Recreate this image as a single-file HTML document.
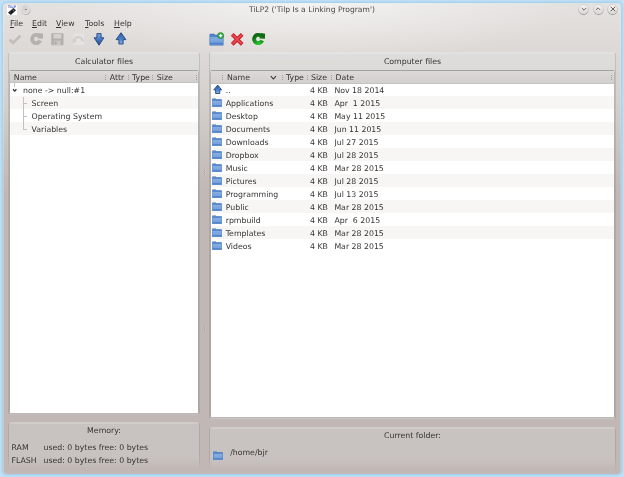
<!DOCTYPE html>
<html>
<head>
<meta charset="utf-8">
<title>TiLP2 ('Tilp Is a Linking Program')</title>
<style>
html,body{margin:0;padding:0;}
body{width:624px;height:477px;overflow:hidden;background:#c4dff3;font-family:"DejaVu Sans","Liberation Sans",sans-serif;font-size:7.8px;color:#363432;position:relative;}
.abs{position:absolute;}
#win{position:absolute;left:3px;top:3px;width:618px;height:471px;border-radius:4px;
 background:
  radial-gradient(ellipse 260px 58px at 309px 0px,rgba(255,255,255,0.58) 0,rgba(255,255,255,0.28) 50%,rgba(255,255,255,0) 100%),
  linear-gradient(to bottom,#e4e2e0 0px,#dfdbd8 35px,#dcd8d5 52px,#d3cfcc 103px,#c8c3bf 147px,#c4bcb8 172px,#c1b8b5 192px,#c1b8b5 471px);
 box-shadow:inset 1px 0 0 rgba(255,255,255,0.22),inset -1px 0 0 rgba(255,255,255,0.15),0 0 0 1px #a6d4f0,0 0 0 2px #b2d9f2,0 0 0 3px #c0def3;}
#c{position:absolute;left:-3px;top:-3px;width:624px;height:477px;}
.t{position:absolute;white-space:nowrap;line-height:10px;height:10px;filter:blur(0.4px);}
u{text-decoration-thickness:0.7px;text-underline-offset:1px;}
.frame{position:absolute;border-radius:3px;box-sizing:border-box;background:rgba(228,240,238,0.2);border:1px solid rgba(0,0,0,0.13);border-top-color:rgba(255,255,255,0.12);border-bottom-color:rgba(0,0,0,0.03);box-shadow:inset 0 1px 0 rgba(255,255,255,0.16);}
.fade{-webkit-mask-image:linear-gradient(to bottom,#000 70%,transparent 100%);mask-image:linear-gradient(to bottom,#000 70%,transparent 100%);}
.tree{position:absolute;background:#fff;overflow:hidden;box-sizing:border-box;border:1px solid rgba(0,0,0,0.15);border-top-color:rgba(0,0,0,0.25);border-bottom-color:rgba(0,0,0,0.06);border-radius:2px;background-clip:padding-box;}
.tree>.in{position:absolute;left:0;top:0;right:0;bottom:0;background:#fff;}
.hdr{position:absolute;left:0;top:0;right:0;background:linear-gradient(#dcdad8,#d2cfcc);border-bottom:1px solid #c6c2bf;box-sizing:border-box;}
.row{position:absolute;left:0;right:0;height:13px;}
.alt{background:#f7f6f5;}
.sep{position:absolute;width:1px;height:5px;margin-top:1px;background:repeating-linear-gradient(#a29e9b 0 1px,transparent 1px 2px);}
.dot{position:absolute;width:1px;height:1px;background:rgba(0,0,0,0.12);box-shadow:1px 0 0 rgba(255,255,255,0.2);}
.btn{position:absolute;width:9px;height:9px;border-radius:50%;background:linear-gradient(#f3f2f1,#e4e2e0 60%,#d8d6d4);box-shadow:0 0 0 0.6px rgba(0,0,0,0.13),0 0.8px 1px rgba(0,0,0,0.35);}
</style>
</head>
<body>
<svg width="0" height="0" style="position:absolute"><defs>
<linearGradient id="fg" x1="0" y1="0" x2="0" y2="1"><stop offset="0" stop-color="#82ace4"/><stop offset="1" stop-color="#739fdc"/></linearGradient>
<linearGradient id="ag" x1="0" y1="0" x2="0" y2="1"><stop offset="0" stop-color="#2f5fa6"/><stop offset="0.55" stop-color="#4a7cc8"/><stop offset="1" stop-color="#86b4f2"/></linearGradient>
<linearGradient id="dg" x1="0" y1="0" x2="0" y2="1"><stop offset="0" stop-color="#7aa9ea"/><stop offset="0.5" stop-color="#4677c2"/><stop offset="1" stop-color="#28518f"/></linearGradient>
<radialGradient id="gg" gradientUnits="userSpaceOnUse" cx="6.8" cy="11.5" r="9"><stop offset="0" stop-color="#2ad034"/><stop offset="0.45" stop-color="#1a9e22"/><stop offset="1" stop-color="#0c6a13"/></radialGradient>
</defs></svg>
<div id="win"><div id="c">

<div class="t" style="left:0;width:624px;text-align:center;top:5.1px;color:#484644;font-size:7.6px;">TiLP2 ('Tilp Is a Linking Program')</div>
<svg class="abs" style="left:7px;top:5px;filter:blur(0.3px)" width="10" height="10" viewBox="0 0 10 10"><rect width="10" height="10" fill="#fff"/><text x="0.7" y="2.9" font-size="3.3" font-weight="bold" fill="#4a62cc" font-family="DejaVu Sans,sans-serif" textLength="8.4" lengthAdjust="spacingAndGlyphs">TiLP</text><path d="M1 7.7 L6.3 2.9 L9 5.3 L3.9 10 Z" fill="#1a1c20"/><path d="M5.6 4.6 L7.2 6" stroke="#7fa0a8" stroke-width="1"/><path d="M3 7.2 L4.6 8.6" stroke="#3a3e44" stroke-width="0.8"/></svg>
<div class="abs" style="left:21.4px;top:5.4px;width:9px;height:9px;border-radius:50%;background:radial-gradient(circle at 45% 42%,#d0cecc 0,#d9d7d5 40%,#e2e0de 65%,#c4c2c0 100%);box-shadow:0.3px 0.6px 0.9px rgba(0,0,0,0.38)"></div><div class="abs" style="left:25.3px;top:9.1px;width:1.3px;height:1.2px;background:#8a8886;border-radius:50%"></div>
<div class="btn" style="left:579.3px;top:4.8px"></div><svg class="abs" style="left:578.8px;top:4.3px" width="10" height="10" viewBox="-5 -5 10 10"><path d="M-2.1 -0.9 L0 1.2 L2.1 -0.9" fill="none" stroke="#555351" stroke-width="0.9"/></svg>
<div class="btn" style="left:593.7px;top:4.8px"></div><svg class="abs" style="left:593.2px;top:4.3px" width="10" height="10" viewBox="-5 -5 10 10"><path d="M-2.1 0.9 L0 -1.2 L2.1 0.9" fill="none" stroke="#555351" stroke-width="0.9"/></svg>
<div class="btn" style="left:608.2px;top:4.8px"></div><svg class="abs" style="left:607.7px;top:4.3px" width="10" height="10" viewBox="-5 -5 10 10"><path d="M-2.2 -2.2 L2.2 2.2 M2.2 -2.2 L-2.2 2.2" fill="none" stroke="#555351" stroke-width="0.9"/></svg>
<div class="t" style="left:10px;top:19px;"><u>F</u>ile</div>
<div class="t" style="left:32px;top:19px;"><u>E</u>dit</div>
<div class="t" style="left:56px;top:19px;"><u>V</u>iew</div>
<div class="t" style="left:85px;top:19px;"><u>T</u>ools</div>
<div class="t" style="left:114px;top:19px;"><u>H</u>elp</div>
<svg class="abs" style="left:8px;top:33px" width="14" height="13" viewBox="0 0 14 13"><path d="M1.6 6.6 L5 10 L12.4 2.6" fill="none" stroke="#c1bdba" stroke-width="2.7" stroke-linejoin="round"/></svg>
<svg class="abs" style="left:29.7px;top:33px;overflow:visible" width="14" height="13" viewBox="0 0 14 13"><path d="M10.15 7.55 A4.15 4.15 0 1 1 8.68 2.60" fill="none" stroke="#b5b1ae" stroke-width="3.9"/><path d="M7.4 5.6 L12.9 5.8 L13.1 0.7 L8.8 -0.1 Z" fill="#b5b1ae"/></svg>
<svg class="abs" style="left:51px;top:33px" width="13" height="13" viewBox="0 0 13 13"><rect x="0.3" y="0.3" width="12.2" height="12" rx="0.8" fill="#b3afac"/><rect x="2.4" y="1" width="8" height="4.6" fill="#d3d0cd"/><rect x="3" y="7.6" width="6.8" height="4.4" fill="#c9c6c3"/><rect x="3.8" y="8.6" width="1.8" height="2.6" fill="#aaa6a3"/></svg>
<svg class="abs" style="left:71.5px;top:33px" width="13" height="13" viewBox="0 0 13 13"><rect x="1.6" y="0.6" width="10.4" height="11.4" fill="#e6e4e2" opacity="0.8"/><path d="M2.2 8.2 A4.2 4.2 0 0 1 10.6 8.4" fill="none" stroke="#d1cecb" stroke-width="2.2"/><path d="M0.2 6.2 L4.8 7.4 L1.6 10.6 Z" fill="#d1cecb"/></svg>
<svg class="abs" style="left:93.1px;top:32.8px" width="12" height="13" viewBox="0 0 12 13"><path d="M3.9 0.6 H8.1 V4.8 H10.9 L6 12.2 L1.1 4.8 H3.9 Z" fill="url(#dg)" stroke="#224579" stroke-width="0.9" stroke-linejoin="round"/></svg>
<svg class="abs" style="left:114.7px;top:32.2px" width="12" height="13" viewBox="0 0 12 13"><path d="M6 0.7 L10.9 7.6 H8.1 V12 H3.9 V7.6 H1.1 Z" fill="url(#ag)" stroke="#224579" stroke-width="0.9" stroke-linejoin="round"/></svg>
<svg class="abs" style="left:208.7px;top:32.7px;overflow:visible" width="15" height="13" viewBox="0 0 15 13"><path d="M0.5 1.6 q0-0.8 0.8-0.8 h3.8 l0.9 1 h7.9 q0.6 0 0.6 0.6 v9.5 q0 0.6-0.6 0.6 h-12.8 q-0.6 0-0.6-0.6z" fill="#3d6eb6"/><rect x="1.1" y="1.4" width="4" height="1.4" fill="#5689d2"/><rect x="1.1" y="2.4" width="12.8" height="1.4" fill="#5689d2"/><rect x="1.1" y="4.3" width="12.8" height="0.8" fill="#a0c0ec"/><rect x="1.1" y="5.1" width="12.8" height="4.7" fill="url(#fg)"/><rect x="1.1" y="10.4" width="12.8" height="1.6" fill="#5b8ed4"/><circle cx="11.6" cy="2.6" r="3" fill="#27a633" stroke="#14821f" stroke-width="0.6"/><path d="M11.6 0.8 V4.4 M9.8 2.6 H13.4" stroke="#fff" stroke-width="1.4"/></svg>
<svg class="abs" style="left:230px;top:32.6px" width="14" height="13" viewBox="0 0 14 13"><path d="M2.2 1.3 L12.2 11.3 M12.2 1.3 L2.2 11.3" stroke="#d01f2b" stroke-width="3.8" stroke-linecap="butt"/><path d="M2.6 1.8 L11.8 10.8 M11.8 1.8 L2.6 10.8" stroke="#e4525a" stroke-width="1.5" /></svg>
<svg class="abs" style="left:251.8px;top:33px;overflow:visible" width="14" height="13" viewBox="0 0 14 13"><path d="M10.15 7.55 A4.15 4.15 0 1 1 8.68 2.60" fill="none" stroke="url(#gg)" stroke-width="3.9"/><path d="M7.4 5.6 L12.9 5.8 L13.1 0.7 L8.8 -0.1 Z" fill="url(#gg)"/></svg>
<div class="dot" style="left:204px;top:170px"></div><div class="dot" style="left:204px;top:172px"></div><div class="dot" style="left:204px;top:174px"></div><div class="dot" style="left:204px;top:326px"></div><div class="dot" style="left:204px;top:328px"></div><div class="dot" style="left:204px;top:330px"></div>
<div class="frame" style="left:8px;top:52px;width:192px;height:363px;"></div>
<div class="t" style="left:8px;width:192px;text-align:center;top:57px;">Calculator files</div>
<div class="tree" style="left:9px;top:70px;width:190px;height:344px;"><div class="in">
 <div class="hdr" style="height:12px"></div>
 <div class="row alt" style="top:25px;"></div><div class="row alt" style="top:51px;"></div>
 <div class="sep" style="left:95px;top:3px"></div>
 <div class="sep" style="left:118px;top:3px"></div>
 <div class="sep" style="left:142px;top:3px"></div>
 <div class="sep" style="left:186px;top:3px"></div>
<div class="t" style="left:3.8px;top:2px;">Name</div>
<div class="t" style="left:99.8px;top:2px;">Attr</div>
<div class="t" style="left:122px;top:2px;">Type</div>
<div class="t" style="left:146.8px;top:2px;">Size</div>
<div class="t" style="left:13px;top:15px;">none -&gt; null:#1</div>
<div class="t" style="left:21.5px;top:28px;">Screen</div>
<div class="t" style="left:21.5px;top:41px;">Operating System</div>
<div class="t" style="left:21.5px;top:54px;">Variables</div>
 <svg class="abs" style="left:0;top:12px" width="22" height="56" viewBox="0 0 22 56"><path d="M4.5 0 V4 M13.5 14 V47 M13.5 20.5 H17 M13.5 33.5 H17 M13.5 46.5 H17" stroke="#c4c0bd" stroke-width="1" fill="none"/><path d="M3 6.3 L4.7 8.1 L6.4 6.3" stroke="#2e2c2a" stroke-width="1.25" fill="none"/></svg>
</div></div>
<div class="frame" style="left:209px;top:52px;width:407px;height:368px;"></div>
<div class="t" style="left:209px;width:407px;text-align:center;top:57px;">Computer files</div>
<div class="tree" style="left:210px;top:70px;width:405px;height:348px;"><div class="in">
 <div class="hdr" style="height:13px"></div>
 <div class="row alt" style="top:25px;"></div>
 <div class="row alt" style="top:51px;"></div>
 <div class="row alt" style="top:77px;"></div>
 <div class="row alt" style="top:103px;"></div>
 <div class="row alt" style="top:129px;"></div>
 <div class="row alt" style="top:155px;"></div>
<svg class="abs" style="left:1.5px;top:13.0px" width="10" height="10" viewBox="0 0 10 10"><path d="M4.7 1.1 L8.7 5.9 H6.8 V9.5 H2.6 V5.9 H0.7 Z" fill="url(#ag)" stroke="#274b7e" stroke-width="0.9" stroke-linejoin="round"/></svg>
 <div class="t" style="left:14.7px;top:15px;">..</div><div class="t" style="left:99px;top:15px;">4 KB</div><div class="t" style="left:123.4px;top:15px;">Nov 18 2014</div>
<svg class="abs" style="left:1.4px;top:26.5px" width="10" height="10" viewBox="0 0 10 10"><path d="M0.2 1.1 q0-0.6 0.6-0.6 h2.9 l0.6 0.8 h5 q0.5 0 0.5 0.5 v6.8 q0 0.5-0.5 0.5 h-8.6 q-0.5 0-0.5-0.5z" fill="#4373bb"/><rect x="0.6" y="0.9" width="3.1" height="1" fill="#5c8fd6"/><rect x="0.6" y="1.7" width="8.8" height="1.1" fill="#5c8fd6"/><rect x="0.6" y="3.2" width="8.8" height="0.7" fill="#a6c5ee"/><rect x="0.6" y="3.9" width="8.8" height="3.4" fill="url(#fg)"/><rect x="0.6" y="7.7" width="8.8" height="1.2" fill="#6092d8"/></svg>
 <div class="t" style="left:14.7px;top:28px;">Applications</div><div class="t" style="left:99px;top:28px;">4 KB</div><div class="t" style="left:123.4px;top:28px;">Apr  1 2015</div>
<svg class="abs" style="left:1.4px;top:39.5px" width="10" height="10" viewBox="0 0 10 10"><path d="M0.2 1.1 q0-0.6 0.6-0.6 h2.9 l0.6 0.8 h5 q0.5 0 0.5 0.5 v6.8 q0 0.5-0.5 0.5 h-8.6 q-0.5 0-0.5-0.5z" fill="#4373bb"/><rect x="0.6" y="0.9" width="3.1" height="1" fill="#5c8fd6"/><rect x="0.6" y="1.7" width="8.8" height="1.1" fill="#5c8fd6"/><rect x="0.6" y="3.2" width="8.8" height="0.7" fill="#a6c5ee"/><rect x="0.6" y="3.9" width="8.8" height="3.4" fill="url(#fg)"/><rect x="0.6" y="7.7" width="8.8" height="1.2" fill="#6092d8"/></svg>
 <div class="t" style="left:14.7px;top:41px;">Desktop</div><div class="t" style="left:99px;top:41px;">4 KB</div><div class="t" style="left:123.4px;top:41px;">May 11 2015</div>
<svg class="abs" style="left:1.4px;top:52.5px" width="10" height="10" viewBox="0 0 10 10"><path d="M0.2 1.1 q0-0.6 0.6-0.6 h2.9 l0.6 0.8 h5 q0.5 0 0.5 0.5 v6.8 q0 0.5-0.5 0.5 h-8.6 q-0.5 0-0.5-0.5z" fill="#4373bb"/><rect x="0.6" y="0.9" width="3.1" height="1" fill="#5c8fd6"/><rect x="0.6" y="1.7" width="8.8" height="1.1" fill="#5c8fd6"/><rect x="0.6" y="3.2" width="8.8" height="0.7" fill="#a6c5ee"/><rect x="0.6" y="3.9" width="8.8" height="3.4" fill="url(#fg)"/><rect x="0.6" y="7.7" width="8.8" height="1.2" fill="#6092d8"/></svg>
 <div class="t" style="left:14.7px;top:54px;">Documents</div><div class="t" style="left:99px;top:54px;">4 KB</div><div class="t" style="left:123.4px;top:54px;">Jun 11 2015</div>
<svg class="abs" style="left:1.4px;top:65.5px" width="10" height="10" viewBox="0 0 10 10"><path d="M0.2 1.1 q0-0.6 0.6-0.6 h2.9 l0.6 0.8 h5 q0.5 0 0.5 0.5 v6.8 q0 0.5-0.5 0.5 h-8.6 q-0.5 0-0.5-0.5z" fill="#4373bb"/><rect x="0.6" y="0.9" width="3.1" height="1" fill="#5c8fd6"/><rect x="0.6" y="1.7" width="8.8" height="1.1" fill="#5c8fd6"/><rect x="0.6" y="3.2" width="8.8" height="0.7" fill="#a6c5ee"/><rect x="0.6" y="3.9" width="8.8" height="3.4" fill="url(#fg)"/><rect x="0.6" y="7.7" width="8.8" height="1.2" fill="#6092d8"/></svg>
 <div class="t" style="left:14.7px;top:67px;">Downloads</div><div class="t" style="left:99px;top:67px;">4 KB</div><div class="t" style="left:123.4px;top:67px;">Jul 27 2015</div>
<svg class="abs" style="left:1.4px;top:78.5px" width="10" height="10" viewBox="0 0 10 10"><path d="M0.2 1.1 q0-0.6 0.6-0.6 h2.9 l0.6 0.8 h5 q0.5 0 0.5 0.5 v6.8 q0 0.5-0.5 0.5 h-8.6 q-0.5 0-0.5-0.5z" fill="#4373bb"/><rect x="0.6" y="0.9" width="3.1" height="1" fill="#5c8fd6"/><rect x="0.6" y="1.7" width="8.8" height="1.1" fill="#5c8fd6"/><rect x="0.6" y="3.2" width="8.8" height="0.7" fill="#a6c5ee"/><rect x="0.6" y="3.9" width="8.8" height="3.4" fill="url(#fg)"/><rect x="0.6" y="7.7" width="8.8" height="1.2" fill="#6092d8"/></svg>
 <div class="t" style="left:14.7px;top:80px;">Dropbox</div><div class="t" style="left:99px;top:80px;">4 KB</div><div class="t" style="left:123.4px;top:80px;">Jul 28 2015</div>
<svg class="abs" style="left:1.4px;top:91.5px" width="10" height="10" viewBox="0 0 10 10"><path d="M0.2 1.1 q0-0.6 0.6-0.6 h2.9 l0.6 0.8 h5 q0.5 0 0.5 0.5 v6.8 q0 0.5-0.5 0.5 h-8.6 q-0.5 0-0.5-0.5z" fill="#4373bb"/><rect x="0.6" y="0.9" width="3.1" height="1" fill="#5c8fd6"/><rect x="0.6" y="1.7" width="8.8" height="1.1" fill="#5c8fd6"/><rect x="0.6" y="3.2" width="8.8" height="0.7" fill="#a6c5ee"/><rect x="0.6" y="3.9" width="8.8" height="3.4" fill="url(#fg)"/><rect x="0.6" y="7.7" width="8.8" height="1.2" fill="#6092d8"/></svg>
 <div class="t" style="left:14.7px;top:93px;">Music</div><div class="t" style="left:99px;top:93px;">4 KB</div><div class="t" style="left:123.4px;top:93px;">Mar 28 2015</div>
<svg class="abs" style="left:1.4px;top:104.5px" width="10" height="10" viewBox="0 0 10 10"><path d="M0.2 1.1 q0-0.6 0.6-0.6 h2.9 l0.6 0.8 h5 q0.5 0 0.5 0.5 v6.8 q0 0.5-0.5 0.5 h-8.6 q-0.5 0-0.5-0.5z" fill="#4373bb"/><rect x="0.6" y="0.9" width="3.1" height="1" fill="#5c8fd6"/><rect x="0.6" y="1.7" width="8.8" height="1.1" fill="#5c8fd6"/><rect x="0.6" y="3.2" width="8.8" height="0.7" fill="#a6c5ee"/><rect x="0.6" y="3.9" width="8.8" height="3.4" fill="url(#fg)"/><rect x="0.6" y="7.7" width="8.8" height="1.2" fill="#6092d8"/></svg>
 <div class="t" style="left:14.7px;top:106px;">Pictures</div><div class="t" style="left:99px;top:106px;">4 KB</div><div class="t" style="left:123.4px;top:106px;">Jul 28 2015</div>
<svg class="abs" style="left:1.4px;top:117.5px" width="10" height="10" viewBox="0 0 10 10"><path d="M0.2 1.1 q0-0.6 0.6-0.6 h2.9 l0.6 0.8 h5 q0.5 0 0.5 0.5 v6.8 q0 0.5-0.5 0.5 h-8.6 q-0.5 0-0.5-0.5z" fill="#4373bb"/><rect x="0.6" y="0.9" width="3.1" height="1" fill="#5c8fd6"/><rect x="0.6" y="1.7" width="8.8" height="1.1" fill="#5c8fd6"/><rect x="0.6" y="3.2" width="8.8" height="0.7" fill="#a6c5ee"/><rect x="0.6" y="3.9" width="8.8" height="3.4" fill="url(#fg)"/><rect x="0.6" y="7.7" width="8.8" height="1.2" fill="#6092d8"/></svg>
 <div class="t" style="left:14.7px;top:119px;">Programming</div><div class="t" style="left:99px;top:119px;">4 KB</div><div class="t" style="left:123.4px;top:119px;">Jul 13 2015</div>
<svg class="abs" style="left:1.4px;top:130.5px" width="10" height="10" viewBox="0 0 10 10"><path d="M0.2 1.1 q0-0.6 0.6-0.6 h2.9 l0.6 0.8 h5 q0.5 0 0.5 0.5 v6.8 q0 0.5-0.5 0.5 h-8.6 q-0.5 0-0.5-0.5z" fill="#4373bb"/><rect x="0.6" y="0.9" width="3.1" height="1" fill="#5c8fd6"/><rect x="0.6" y="1.7" width="8.8" height="1.1" fill="#5c8fd6"/><rect x="0.6" y="3.2" width="8.8" height="0.7" fill="#a6c5ee"/><rect x="0.6" y="3.9" width="8.8" height="3.4" fill="url(#fg)"/><rect x="0.6" y="7.7" width="8.8" height="1.2" fill="#6092d8"/></svg>
 <div class="t" style="left:14.7px;top:132px;">Public</div><div class="t" style="left:99px;top:132px;">4 KB</div><div class="t" style="left:123.4px;top:132px;">Mar 28 2015</div>
<svg class="abs" style="left:1.4px;top:143.5px" width="10" height="10" viewBox="0 0 10 10"><path d="M0.2 1.1 q0-0.6 0.6-0.6 h2.9 l0.6 0.8 h5 q0.5 0 0.5 0.5 v6.8 q0 0.5-0.5 0.5 h-8.6 q-0.5 0-0.5-0.5z" fill="#4373bb"/><rect x="0.6" y="0.9" width="3.1" height="1" fill="#5c8fd6"/><rect x="0.6" y="1.7" width="8.8" height="1.1" fill="#5c8fd6"/><rect x="0.6" y="3.2" width="8.8" height="0.7" fill="#a6c5ee"/><rect x="0.6" y="3.9" width="8.8" height="3.4" fill="url(#fg)"/><rect x="0.6" y="7.7" width="8.8" height="1.2" fill="#6092d8"/></svg>
 <div class="t" style="left:14.7px;top:145px;">rpmbuild</div><div class="t" style="left:99px;top:145px;">4 KB</div><div class="t" style="left:123.4px;top:145px;">Apr  6 2015</div>
<svg class="abs" style="left:1.4px;top:156.5px" width="10" height="10" viewBox="0 0 10 10"><path d="M0.2 1.1 q0-0.6 0.6-0.6 h2.9 l0.6 0.8 h5 q0.5 0 0.5 0.5 v6.8 q0 0.5-0.5 0.5 h-8.6 q-0.5 0-0.5-0.5z" fill="#4373bb"/><rect x="0.6" y="0.9" width="3.1" height="1" fill="#5c8fd6"/><rect x="0.6" y="1.7" width="8.8" height="1.1" fill="#5c8fd6"/><rect x="0.6" y="3.2" width="8.8" height="0.7" fill="#a6c5ee"/><rect x="0.6" y="3.9" width="8.8" height="3.4" fill="url(#fg)"/><rect x="0.6" y="7.7" width="8.8" height="1.2" fill="#6092d8"/></svg>
 <div class="t" style="left:14.7px;top:158px;">Templates</div><div class="t" style="left:99px;top:158px;">4 KB</div><div class="t" style="left:123.4px;top:158px;">Mar 28 2015</div>
<svg class="abs" style="left:1.4px;top:169.5px" width="10" height="10" viewBox="0 0 10 10"><path d="M0.2 1.1 q0-0.6 0.6-0.6 h2.9 l0.6 0.8 h5 q0.5 0 0.5 0.5 v6.8 q0 0.5-0.5 0.5 h-8.6 q-0.5 0-0.5-0.5z" fill="#4373bb"/><rect x="0.6" y="0.9" width="3.1" height="1" fill="#5c8fd6"/><rect x="0.6" y="1.7" width="8.8" height="1.1" fill="#5c8fd6"/><rect x="0.6" y="3.2" width="8.8" height="0.7" fill="#a6c5ee"/><rect x="0.6" y="3.9" width="8.8" height="3.4" fill="url(#fg)"/><rect x="0.6" y="7.7" width="8.8" height="1.2" fill="#6092d8"/></svg>
 <div class="t" style="left:14.7px;top:171px;">Videos</div><div class="t" style="left:99px;top:171px;">4 KB</div><div class="t" style="left:123.4px;top:171px;">Mar 28 2015</div>
 <div class="sep" style="left:11px;top:3px"></div>
 <div class="sep" style="left:71px;top:3px"></div>
 <div class="sep" style="left:96px;top:3px"></div>
 <div class="sep" style="left:120px;top:3px"></div>
 <div class="sep" style="left:400px;top:3px"></div>
<div class="t" style="left:16px;top:2px;">Name</div>
 <svg class="abs" style="left:59px;top:4px" width="7" height="6" viewBox="0 0 7 6"><path d="M0.8 1.2 L3.4 4 L6 1.2" stroke="#333" stroke-width="1.1" fill="none"/></svg>
<div class="t" style="left:75px;top:2px;">Type</div>
<div class="t" style="left:100px;top:2px;">Size</div>
<div class="t" style="left:124.4px;top:2px;">Date</div>
</div></div>
<div class="frame fade" style="left:8px;top:422px;width:192px;height:48px;"></div>
<div class="t" style="left:8px;width:192px;text-align:center;top:426px;">Memory:</div>
<div class="t" style="left:11.5px;top:443px;">RAM</div>
<div class="t" style="left:43.5px;top:443px;">used: 0 bytes free: 0 bytes</div>
<div class="t" style="left:11.5px;top:456px;">FLASH</div>
<div class="t" style="left:43.5px;top:456px;">used: 0 bytes free: 0 bytes</div>
<div class="frame fade" style="left:209px;top:427px;width:407px;height:44px;"></div>
<div class="t" style="left:209px;width:407px;text-align:center;top:431px;">Current folder:</div>
<svg class="abs" style="left:213px;top:451px" width="10" height="10" viewBox="0 0 10 10"><path d="M0.2 1.1 q0-0.6 0.6-0.6 h2.9 l0.6 0.8 h5 q0.5 0 0.5 0.5 v6.8 q0 0.5-0.5 0.5 h-8.6 q-0.5 0-0.5-0.5z" fill="#4373bb"/><rect x="0.6" y="0.9" width="3.1" height="1" fill="#5c8fd6"/><rect x="0.6" y="1.7" width="8.8" height="1.1" fill="#5c8fd6"/><rect x="0.6" y="3.2" width="8.8" height="0.7" fill="#a6c5ee"/><rect x="0.6" y="3.9" width="8.8" height="3.4" fill="url(#fg)"/><rect x="0.6" y="7.7" width="8.8" height="1.2" fill="#6092d8"/></svg>
<div class="t" style="left:230.2px;top:448px;">/home/bjr</div>
</div></div>
</body>
</html>
